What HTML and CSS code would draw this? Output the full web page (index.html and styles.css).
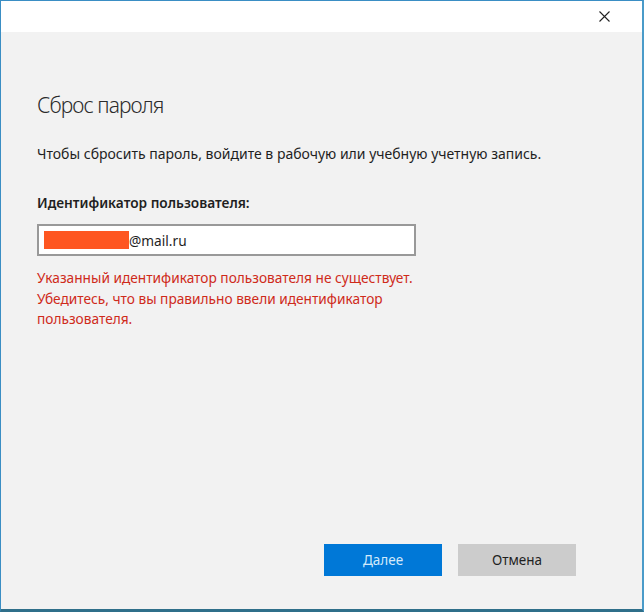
FILE: index.html
```html
<!DOCTYPE html>
<html lang="ru">
<head>
    <meta charset="UTF-8">
    <meta name="viewport" content="width=device-width, initial-scale=1.0">
    <title>Сброс пароля</title>
    <link rel="stylesheet" href="styles.css">
</head>
<body>
    <div class="window">
        <div class="titlebar">
            <button class="close" title="Закрыть">
                <svg width="11" height="11" viewBox="0 0 11 11">
                    <path d="M0.5 0.5L10.5 10.5M10.5 0.5L0.5 10.5" stroke="#222" stroke-width="1.1" fill="none"/>
                </svg>
            </button>
        </div>
        <div class="content">
            <h1 class="heading">Сброс пароля</h1>
            <p class="intro">Чтобы сбросить пароль, войдите в рабочую или учебную учетную запись.</p>
            <label class="label" for="userid">Идентификатор пользователя:</label>
            <div class="input">
                <span class="redacted"></span><span class="value">@mail.ru</span>
            </div>
            <p class="error">Указанный идентификатор пользователя не существует. Убедитесь, что вы правильно ввели идентификатор пользователя.</p>
            <div class="spacer"></div>
            <div class="actions">
                <button class="btn primary">Далее</button>
                <button class="btn">Отмена</button>
            </div>
        </div>
    </div>
</body>
</html>
```

FILE: styles.css
```css
html, body {
    margin: 0;
    height: 100%;
}
body {
    font-family: "Noto Sans", "Open Sans", sans-serif;
    background-color: #f2f2f2;
}
.window {
    box-sizing: border-box;
    height: 612px;
    width: 644px;
    display: flex;
    flex-direction: column;
    border: 1px solid #3a8ec4;
    border-bottom: 3px solid #2f6f8a;
    border-right: 2px solid #4a9bc9;
    background-color: #f2f2f2;
}
.titlebar {
    height: 31px;
    background-color: #fff;
    display: flex;
    justify-content: flex-end;
    align-items: center;
}
.close {
    border: none;
    background: none;
    padding: 0;
    width: 46px;
    height: 31px;
    margin-right: 15px;
    display: flex;
    justify-content: center;
    align-items: center;
}
.content {
    flex: 1;
    display: flex;
    flex-direction: column;
    padding: 0 0 0 36px;
    color: #1f1f1f;
}
.heading {
    margin: 59px 0 0 0;
    font-size: 21px;
    font-weight: 300;
    letter-spacing: -0.9px;
    color: #2b2b2b;
    line-height: 28px;
}
.intro {
    margin: 25px 0 0 0;
    font-size: 14px;
    line-height: 20px;
}
.label {
    margin-top: 29px;
    font-size: 13.7px;
    font-weight: 600;
    line-height: 20px;
}
.input {
    box-sizing: border-box;
    margin-top: 11px;
    width: 379px;
    height: 32px;
    border: 2px solid #999;
    background-color: #fff;
    display: flex;
    align-items: center;
    padding-left: 5px;
    font-size: 13.7px;
}
.redacted {
    width: 85px;
    height: 18px;
    background-color: #fe5621;
}
.error {
    margin: 12px 0 0 0;
    width: 390px;
    font-size: 13.7px;
    line-height: 20.5px;
    color: #cf2a1a;
}
.spacer {
    flex: 1;
}
.actions {
    display: flex;
    justify-content: flex-end;
    gap: 16px;
    padding-right: 66px;
    margin-bottom: 33px;
}
.btn {
    width: 118px;
    height: 32px;
    border: none;
    font-family: inherit;
    font-size: 13.5px;
    background-color: #cccccc;
    color: #1f1f1f;
}
.btn.primary {
    background-color: #0078d7;
    color: #d4eafb;
}
```
